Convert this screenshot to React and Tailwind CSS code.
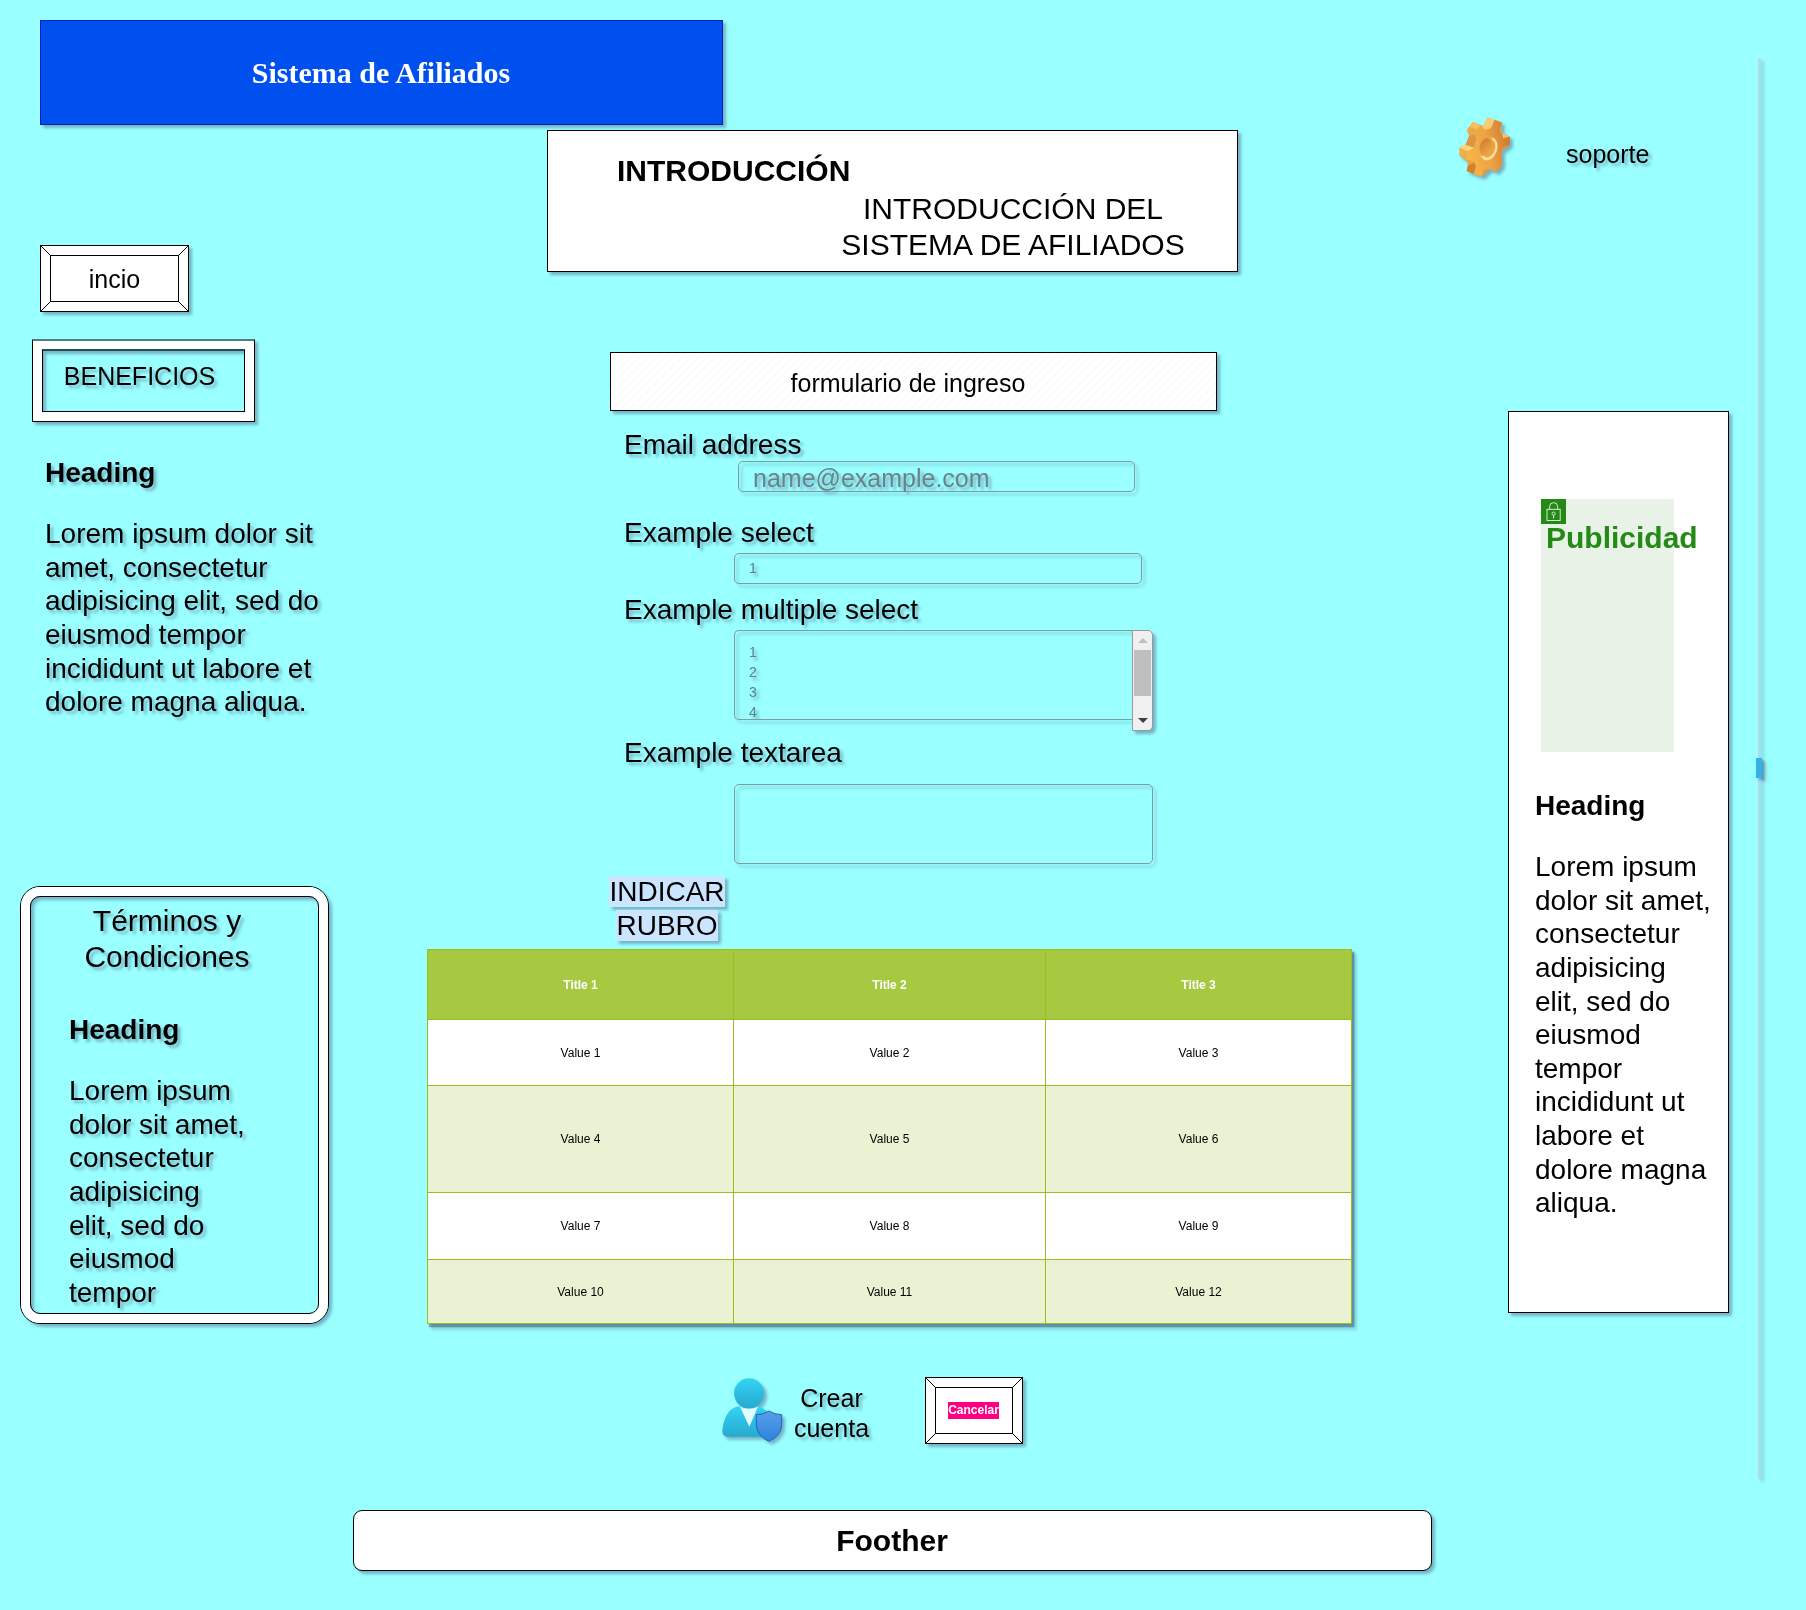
const rows = [
  ['Value 1', 'Value 2', 'Value 3'],
  ['Value 4', 'Value 5', 'Value 6'],
  ['Value 7', 'Value 8', 'Value 9'],
  ['Value 10', 'Value 11', 'Value 12'],
];

const LOREM =
  'Lorem ipsum dolor sit amet, consectetur adipisicing elit, sed do eiusmod tempor incididunt ut labore et dolore magna aliqua.';

function BevelButton({ w, h, dx, dy, className, children }) {
  const r = w - 0.5;
  const b = h - 0.5;
  return (
    <button type="button" className={`relative flex items-center justify-center bg-white ${className}`}>
      <svg className="absolute inset-0" width={w} height={h} fill="none" stroke="#000">
        <rect x="0.5" y="0.5" width={w - 1} height={h - 1} />
        <rect x={dx + 0.5} y={dy + 0.5} width={w - 1 - 2 * dx} height={h - 1 - 2 * dy} />
        <path
          d={`M0.5 0.5L${dx + 0.5} ${dy + 0.5}M${r} 0.5L${r - dx} ${dy + 0.5}M0.5 ${b}L${dx + 0.5} ${b - dy}M${r} ${b}L${r - dx} ${b - dy}`}
        />
      </svg>
      <span className="relative">{children}</span>
    </button>
  );
}

function TextBlock({ children, className = '' }) {
  return (
    <div className={`text-[28px] leading-[33.6px] ${className}`}>
      <h2 className="font-bold">Heading</h2>
      <p className="mt-[27.6px]">{children}</p>
    </div>
  );
}

function GearIcon() {
  return (
    <svg width="52" height="60" viewBox="87 229 156 180">
      <defs>
        <linearGradient id="gearFace" x1="0" y1="0.6" x2="1" y2="0.35">
          <stop offset="0" stopColor="#f9b646" />
          <stop offset="0.5" stopColor="#eba344" />
          <stop offset="1" stopColor="#cf7836" />
        </linearGradient>
        <linearGradient id="gearSide" x1="0" y1="0" x2="1" y2="1">
          <stop offset="0" stopColor="#f9c054" />
          <stop offset="1" stopColor="#d98a35" />
        </linearGradient>
        <linearGradient id="gearHole" x1="0" y1="0" x2="1" y2="1">
          <stop offset="0" stopColor="#cf7a30" />
          <stop offset="1" stopColor="#f0ab48" />
        </linearGradient>
      </defs>
      <path
        fill="url(#gearSide)"
        d="M110 268L129 244L152 254L160 256L172 230L216 245L214 268L217 278L240 288L238 315L216 330L216 375L200 394L180 385L156 408L110 391L114 372L108 358L88 346L88 320L106 312L118 286Z"
      />
      <path fill="#dc963f" d="M118 284L135 279L139 296L130 322L106 315Z" />
      <path fill="#eaaa48" d="M112 268L129 244L151 255L137 281L118 286Z" />
      <path fill="#f8bf58" d="M129 244L151 255L141 266L118 258Z" />
      <path fill="#fdd67c" d="M88 320L106 312L133 322L112 332Z" />
      <path fill="#d1812f" d="M114 374L134 366L140 379L132 400L110 391Z" />
      <path
        fill="url(#gearFace)"
        d="M193 238L216 246L208 270L217 283L240 289L239 313L219 321L212 345L218 362L200 393L178 385L163 386L155 408L131 400L138 378L131 362L109 356L111 331L133 326L141 303L135 279L150 254L166 268L182 261Z"
      />
      <path fill="#fcd27a" d="M172 230L193 237L184 262L166 268L158 260Z" opacity="0.8" />
      <path fill="#f9c25c" d="M217 278L240 288L219 293Z" />
      <ellipse cx="175" cy="324" rx="26" ry="36" fill="#fbcd7c" transform="rotate(14 175 324)" />
      <ellipse cx="173" cy="320" rx="25" ry="34" fill="#eaa446" transform="rotate(14 173 320)" />
      <path fill="none" stroke="#fddc98" strokeWidth="7" d="M186 293Q202 300 199 322Q194 348 174 354Q163 356 158 346" />
      <ellipse cx="168" cy="318" rx="18" ry="26" fill="url(#gearHole)" transform="rotate(14 168 318)" />
    </svg>
  );
}

function UserIcon() {
  return (
    <svg width="61" height="65" viewBox="66 52 183 195">
      <defs>
        <linearGradient id="userHead" x1="0" y1="0" x2="0" y2="1">
          <stop offset="0" stopColor="#32d4f5" />
          <stop offset="1" stopColor="#28a8cf" />
        </linearGradient>
        <linearGradient id="userShield" x1="0" y1="0" x2="0" y2="1">
          <stop offset="0" stopColor="#5a9fe8" />
          <stop offset="1" stopColor="#2c83dc" />
        </linearGradient>
      </defs>
      <path
        fill="url(#userHead)"
        d="M67 212C68 188 78 152 102 141Q112 137 122 138L174 138Q200 142 214 172L226 228L82 228Q67 228 67 212Z"
      />
      <path fill="#e4fbff" d="M120 138Q147 150 174 138L148 198Z" />
      <circle cx="147" cy="98" r="45" fill="url(#userHead)" />
      <path
        fill="url(#userShield)"
        stroke="#1c66b8"
        strokeWidth="3"
        strokeLinejoin="round"
        d="M207 151Q223 162 245 162V194Q243 226 207 242Q171 226 169 194V162Q191 162 207 151Z"
      />
    </svg>
  );
}

function LockIcon() {
  return (
    <svg width="25" height="25" viewBox="0 0 25 25" fill="none" stroke="#e8f3e4" strokeWidth="0.9">
      <rect x="6" y="10.3" width="13.2" height="11.2" />
      <path d="M8.6 10.3V7.6a4 4 0 0 1 8 0V10.3" />
      <circle cx="12.6" cy="14.6" r="1.6" />
      <path d="M12.6 16.2V19.5" />
    </svg>
  );
}

function Label({ children, className = '' }) {
  return <label className={`block h-[34px] text-[28px] leading-[36px] ${className}`}>{children}</label>;
}

export default function App() {
  return (
    <div className="h-[1610px] w-[1806px] overflow-hidden bg-[#99ffff] font-['Liberation_Sans',Arial,sans-serif] text-black">
      <div className="flex h-full w-full drop-shadow-[3px_3px_1.7px_rgba(61,69,116,0.4)]">
        <div className="flex w-[1440px] shrink-0 flex-col pt-5">
          <header className="ml-10 flex h-[105px] w-[683px] shrink-0 items-center justify-center border border-[#001dbc] bg-[#0050ef] pr-px">
            <h1 className="font-['Liberation_Serif',serif] text-[30px] leading-9 font-bold text-white">Sistema de Afiliados</h1>
          </header>

          <div className="flex">
            <aside className="w-[410px] shrink-0 pt-[120px]">
              <BevelButton w={149} h={67} dx={10} dy={10} className="ml-10 h-[67px] w-[149px] text-[25px] leading-[30px]">
                incio
              </BevelButton>
              <div className="mt-[27px] ml-8 h-[83px] w-[223px] border border-t-2 border-black border-t-[#4c7f7f]">
                <div className="h-full border-[9px] border-t-8 border-white">
                  <div className="flex h-full justify-center border border-t-2 border-black border-t-[#264d57] pt-[10px] pr-[8px] text-[25px] leading-[30px]">
                    BENEFICIOS
                  </div>
                </div>
              </div>
              <TextBlock className="h-[464px] w-[330px] pt-[34px] pl-[45px]">{LOREM}</TextBlock>
              <section className="ml-5 h-[438px] w-[309px] rounded-[20px] border border-black">
                <div className="h-full rounded-[19px] border-[9px] border-white">
                  <div className="h-full rounded-[10px] border border-black pt-[6px]">
                    <p className="pr-[15px] text-center text-[30px] leading-9">
                      Términos y<br />
                      Condiciones
                    </p>
                    <TextBlock className="w-[217px] pt-[38px] pl-[38px]">
                      Lorem ipsum dolor sit amet, consectetur adipisicing elit, sed do eiusmod tempor
                    </TextBlock>
                  </div>
                </div>
              </section>
            </aside>

            <main className="w-[1030px] shrink-0 pt-[5px]">
              <section className="ml-[137px] h-[142px] w-[691px] border border-black bg-white">
                <h2 className="pt-[22px] pl-[69px] text-[30px] leading-9 font-bold">INTRODUCCIÓN</h2>
                <p className="mt-[2px] ml-[285px] w-[360px] text-center text-[30px] leading-9">
                  INTRODUCCIÓN DEL SISTEMA DE AFILIADOS
                </p>
              </section>

              <div className="mt-20 ml-[200px] flex h-[59px] w-[607px] items-center justify-center border border-black bg-[repeating-linear-gradient(135deg,#fff_0px,#fff_4px,#f8f8f8_5px,#fff_6px)] pt-[2px] pr-[11px] text-[25px] leading-[30px]">
                formulario de ingreso
              </div>

              <form className="pl-[214px]">
                <Label className="mt-4">Email address</Label>
                <div className="ml-[114px] h-[31px] w-[397px] rounded-[5px] border border-[#7f9c9c] pl-[14px] text-[25px] leading-[32px] text-[#6c8287]">
                  name@example.com
                </div>
                <Label className="mt-[23px]">Example select</Label>
                <div className="mt-1 ml-[110px] h-[31px] w-[408px] rounded-[5px] border border-[#7f9c9c] pl-[14px] text-[14px] leading-[29px] text-[#5f8087]">
                  1
                </div>
                <Label className="mt-2">Example multiple select</Label>
                <div className="mt-1 ml-[110px] flex h-[101px]">
                  <div className="h-[90px] w-[398px] overflow-hidden rounded-l-[5px] border border-r-0 border-[#7f9c9c] pt-[11px] pl-[14px] text-[14px] leading-5 text-[#5f8087]">
                    <div>1</div>
                    <div>2</div>
                    <div>3</div>
                    <div>4</div>
                  </div>
                  <div className="flex h-[101px] w-[21px] flex-col items-center rounded-r-[5px] border border-[#999] bg-[#f0f0f0]">
                    <svg className="mt-[7px]" width="10" height="5">
                      <path d="M0 5L5 0L10 5Z" fill="#bfbfbf" />
                    </svg>
                    <div className="mt-[7px] h-[46px] w-[17px] bg-[#bfbfbf]" />
                    <svg className="mt-[22px]" width="10" height="5">
                      <path d="M0 0L5 5L10 0Z" fill="#404040" />
                    </svg>
                  </div>
                </div>
                <Label className="mt-1">Example textarea</Label>
                <div className="mt-[15px] ml-[110px] h-20 w-[419px] rounded-[5px] border border-[#7f9c9c]" />
              </form>

              <p className="mt-[11px] ml-[187px] w-[140px] text-center text-[28px] leading-[34px]">
                <span className="bg-[#cce5ff]">INDICAR</span>
                <br />
                <span className="bg-[#cce5ff]">RUBRO</span>
              </p>

              <div className="mt-[6px] ml-[17px] grid w-[925px] grid-cols-[305px_311px_305px] grid-rows-[69px_65px_106px_66px_63px] gap-px bg-[#98bf21] p-px text-[12px] shadow-[2px_3px_1px_rgba(61,100,116,0.45)]">
                {['Title 1', 'Title 2', 'Title 3'].map((t) => (
                  <div key={t} className="flex items-center justify-center bg-[#a7c942] font-bold text-white">
                    {t}
                  </div>
                ))}
                {rows.map((r, i) =>
                  r.map((v) => (
                    <div key={v} className={`flex items-center justify-center ${i % 2 ? 'bg-[#eaf2d3]' : 'bg-white'}`}>
                      {v}
                    </div>
                  ))
                )}
              </div>

              <div className="mt-[53px] flex h-[67px] pl-[312px]">
                <div className="pt-[1px]">
                  <UserIcon />
                </div>
                <p className="mt-[6px] w-[97px] text-center text-[25px] leading-[30px]">
                  Crear
                  <br />
                  cuenta
                </p>
                <BevelButton w={98} h={67} dx={10} dy={10} className="ml-[45px] h-[67px] w-[98px]">
                  <span className="mr-px block h-[17px] bg-[#ff0080] text-[12px] leading-[16px] font-bold text-white">Cancelar</span>
                </BevelButton>
              </div>
            </main>
          </div>

          <footer className="mt-[66px] ml-[353px] flex h-[61px] w-[1079px] items-center justify-center rounded-[9px] border border-black bg-white pr-px text-[30px] leading-9 font-bold">
            Foother
          </footer>
        </div>

        <div className="w-[316px] shrink-0 pt-[117px]">
          <div className="flex h-[294px] pl-[19px]">
            <GearIcon />
            <span className="mt-[22px] ml-[55px] text-[25px] leading-[30px]">soporte</span>
          </div>
          <section className="ml-[68px] h-[902px] w-[221px] border border-black bg-white pt-[87px]">
            <div className="ml-8 h-[253px] w-[133px] bg-[#e8f2e6]">
              <div className="h-[25px] w-[25px] bg-[#238a16]">
                <LockIcon />
              </div>
              <div className="-mt-[4px] pl-[5px] text-[30px] leading-9 font-bold text-[#238a16]">Publicidad</div>
            </div>
            <TextBlock className="w-[205px] pt-[37px] pl-[26px]">{LOREM}</TextBlock>
          </section>
        </div>

        <div className="flex h-[1479px] w-[7px] shrink-0 flex-col pt-[58px]">
          <div className="ml-[2px] h-[700px] w-[3px] bg-[#c0c0cd]/50" />
          <div className="h-5 w-[6px] bg-[#33b1e8] shadow-[2px_2px_2px_rgba(61,69,116,0.3)]" />
          <div className="ml-[2px] w-[3px] flex-1 bg-[#c0c0cd]/50" />
        </div>
      </div>
    </div>
  );
}
